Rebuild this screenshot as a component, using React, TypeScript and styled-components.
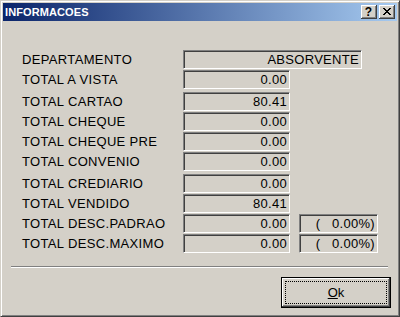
import styled, { createGlobalStyle } from "styled-components"

const GlobalStyle = createGlobalStyle`
  html, body {
    margin: 0;
    padding: 0;
    background: #d4d0c8;
  }
  * {
    box-sizing: border-box;
  }
`

type Line = {
  label: string
  value: string
  percent?: string
  spaced?: boolean
  wide?: boolean
}

const lines: Line[] = [
  { label: "DEPARTAMENTO", value: "ABSORVENTE", wide: true },
  { label: "TOTAL A VISTA", value: "0.00" },
  { label: "TOTAL CARTAO", value: "80.41", spaced: true },
  { label: "TOTAL CHEQUE", value: "0.00" },
  { label: "TOTAL CHEQUE PRE", value: "0.00" },
  { label: "TOTAL CONVENIO", value: "0.00" },
  { label: "TOTAL CREDIARIO", value: "0.00", spaced: true },
  { label: "TOTAL VENDIDO", value: "80.41" },
  { label: "TOTAL DESC.PADRAO", value: "0.00", percent: "(   0.00%)" },
  { label: "TOTAL DESC.MAXIMO", value: "0.00", percent: "(   0.00%)" },
]

function App() {
  return (
    <>
      <GlobalStyle />
      <Window>
        <TitleBar>
          <Title>INFORMACOES</Title>
          <TitleButtons>
            <TitleButton>?</TitleButton>
            <TitleButton>
              <svg width="8" height="7" viewBox="0 0 8 7" shapeRendering="crispEdges">
                <path
                  d="M0 0h2v1h-2zM6 0h2v1h-2zM1 1h2v1h-2zM5 1h2v1h-2zM2 2h4v1h-4zM3 3h2v1h-2zM2 4h4v1h-4zM1 5h2v1h-2zM5 5h2v1h-2zM0 6h2v1h-2zM6 6h2v1h-2z"
                  fill="#000"
                />
              </svg>
            </TitleButton>
          </TitleButtons>
        </TitleBar>
        <Body>
          <Fields>
            {lines.map((line) => (
              <Row key={line.label} $spaced={line.spaced}>
                <Label>{line.label}</Label>
                <Field $width={line.wide ? 179 : 107}>{line.value}</Field>
                {line.percent && <Field $width={79} $gap={9}>{line.percent}</Field>}
              </Row>
            ))}
          </Fields>
          <Separator />
          <Footer>
            <OkButton>
              <Focus>
                <u>O</u>k
              </Focus>
            </OkButton>
          </Footer>
        </Body>
      </Window>
    </>
  )
}

const Window = styled.div`
  width: 400px;
  height: 317px;
  background: #d4d0c8;
  border: 1px solid;
  border-color: #d4d0c8 #404040 #404040 #d4d0c8;
  box-shadow: inset 1px 1px #ffffff, inset -1px -1px #808080;
  padding: 2px;
  display: flex;
  flex-direction: column;
  font-family: "Liberation Sans", Arial, sans-serif;
`

const TitleBar = styled.div`
  height: 18px;
  background: linear-gradient(to right, #0a246a, #a6caf0);
  display: flex;
  align-items: center;
  justify-content: space-between;
  padding: 0 2px 0 2px;
`

const Title = styled.span`
  color: #ffffff;
  font-weight: bold;
  font-size: 11px;
  letter-spacing: 0.1px;
`

const TitleButtons = styled.div`
  display: flex;
  gap: 2px;
`

const TitleButton = styled.div`
  width: 16px;
  height: 14px;
  background: #d4d0c8;
  box-shadow: inset -1px -1px #404040, inset 1px 1px #ffffff,
    inset -2px -2px #808080;
  display: flex;
  align-items: center;
  justify-content: center;
  padding: 0 1px 1px 0;
  font-weight: bold;
  font-size: 12px;
  color: #000;
`

const Body = styled.div`
  flex: 1;
  display: flex;
  flex-direction: column;
`

const Fields = styled.div`
  display: flex;
  flex-direction: column;
  padding: 28px 0 0 19px;
`

const Row = styled.div<{ $spaced?: boolean }>`
  display: flex;
  align-items: center;
  height: 20px;
  margin-top: ${(p) => (p.$spaced ? "2px" : "0")};
`

const Label = styled.span`
  width: 161px;
  font-size: 13px;
  color: #000;
  letter-spacing: 0.35px;
`

const Field = styled.div<{ $width: number; $gap?: number }>`
  width: ${(p) => p.$width}px;
  margin-left: ${(p) => p.$gap ?? 0}px;
  height: 19px;
  border: 1px solid;
  border-color: #808080 #ffffff #ffffff #808080;
  box-shadow: inset 1px 1px #404040;
  font-size: 13px;
  color: #000;
  text-align: right;
  padding: 1px 2px 0 0;
  line-height: 16px;
  letter-spacing: 0.3px;
  white-space: pre;
`

const Separator = styled.div`
  margin: 13px 0 0 8px;
  width: 377px;
  height: 2px;
  border-top: 1px solid #808080;
  border-bottom: 1px solid #ffffff;
`

const Footer = styled.div`
  display: flex;
  justify-content: flex-end;
  padding: 9px 6px 0 0;
`

const OkButton = styled.div`
  width: 110px;
  height: 31px;
  border: 1px solid #000;
  background: #d4d0c8;
  box-shadow: inset -1px -1px #404040, inset 1px 1px #ffffff,
    inset -2px -2px #808080;
  padding: 3px;
  display: flex;
`

const Focus = styled.div`
  flex: 1;
  border: 1px dotted #000;
  display: flex;
  align-items: center;
  justify-content: center;
  font-size: 13px;
  color: #000;
`

export default App
